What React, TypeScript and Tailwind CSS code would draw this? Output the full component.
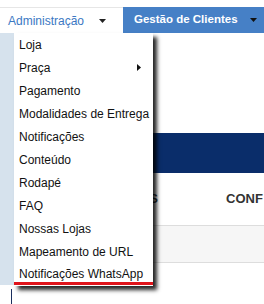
import React from "react";

const items = [
  "Loja",
  "Praça",
  "Pagamento",
  "Modalidades de Entrega",
  "Notificações",
  "Conteúdo",
  "Rodapé",
  "FAQ",
  "Nossas Lojas",
  "Mapeamento de URL",
];

function Caret({ color }: { color: string }) {
  return (
    <svg width="7" height="4" viewBox="0 0 7 4" className="block">
      <polygon points="0,0 7,0 3.5,4" fill={color} />
    </svg>
  );
}

export default function App() {
  return (
    <div
      className="relative w-[264px] h-[304px] overflow-hidden bg-white"
      style={{ fontFamily: '"Liberation Sans", Arial, sans-serif' }}
    >
      {/* top nav */}
      <div className="pt-[7px]">
        <div className="flex h-[26px]">
          <div className="w-[123px] border-t border-[#e6e6e6] flex items-center pl-[8px] pr-[17px] justify-between">
            <span className="text-[12px] text-[#3b78c3]">Administração</span>
            <Caret color="#222" />
          </div>
          <div className="flex-1 bg-[#4680c6] flex items-center pl-[11px] pr-[7px] justify-between">
            <span className="text-[11.5px] font-bold text-white whitespace-nowrap">Gestão de Clientes</span>
            <Caret color="#111" />
          </div>
        </div>
      </div>

      {/* body */}
      <div className="flex">
        <div className="w-[14px] flex flex-col">
          <div className="h-[252px] bg-[#d6e2ed]" />
          <div className="h-[4px]" />
          <div className="ml-[11px] w-[1px] h-[20px] bg-[#1b2f5e]" />
        </div>
        <div className="flex-1 flex flex-col overflow-hidden">
          <div className="h-[100px]" />
          <div className="h-[40px] bg-[#0a2d6a]" />
          <div className="h-[52px] flex items-center overflow-hidden">
            <div className="w-[144px] shrink-0 text-right text-[13px] font-bold text-[#333] whitespace-nowrap overflow-hidden">
              PRODUTOS
            </div>
            <div className="ml-[68px] text-[13px] font-bold text-[#333] whitespace-nowrap">
              CONF
            </div>
          </div>
          <div className="h-[38px] bg-[#f6f6f6] border-y border-[#dddddd]" />
          <div className="h-[24px] flex">
            <div className="ml-[69px] w-[45px] h-[6px] bg-[#2d5a2a] mt-[1px]" />
          </div>
        </div>
      </div>

      {/* dropdown menu */}
      <div className="absolute left-[14px] top-[33px] w-[139px] h-[253px] bg-white shadow-[4px_4px_4px_rgba(0,0,0,0.85)] flex flex-col">
        {items.map((it) => (
          <div
            key={it}
            className="h-[23px] flex items-center justify-between pl-[5px] pr-[12px] text-[12px] text-[#111] whitespace-nowrap"
          >
            <span>{it}</span>
            {it === "Praça" && (
              <svg width="4" height="7" viewBox="0 0 4 7" className="block">
                <polygon points="0,0 4,3.5 0,7" fill="#111" />
              </svg>
            )}
          </div>
        ))}
        <div className="h-[19px] pt-[2px] pl-[5px] text-[12px] leading-[19px] text-[#111] whitespace-nowrap">
          Notificações WhatsApp
        </div>
        <div className="h-[3px] bg-[#e0141b]" />
      </div>
    </div>
  );
}
